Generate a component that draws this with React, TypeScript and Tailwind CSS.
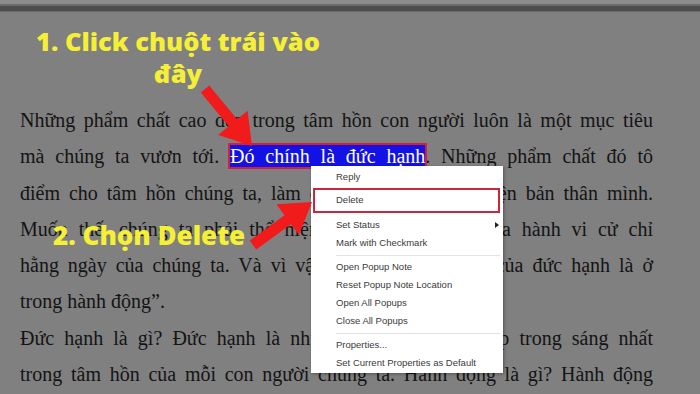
const menuItem = "h-[18px] pl-[25px] flex items-center";

const ContextMenu = () => (
  <div className="absolute left-[311px] top-[166px] w-[192px] h-[207px] bg-white pt-[2px] shadow-[1px_1px_3px_rgba(0,0,0,0.35)] text-[9.5px] text-[#3a3a3a] font-['Liberation_Sans',Arial,sans-serif]">
    <div className={menuItem}>Reply</div>
    <div className="mt-[2px] ml-[2px] mr-[3px] h-[25px] border-2 border-[#c9283c] pl-[21px] flex items-center">Delete</div>
    <div className={menuItem + " mt-[3px] justify-between pr-[4px]"}>
      <span>Set Status</span>
      <svg width="4" height="6" viewBox="0 0 4 6"><path d="M0 0L4 3L0 6Z" fill="#222" /></svg>
    </div>
    <div className={menuItem}>Mark with Checkmark</div>
    <div className="h-[6px] ml-[25px] mr-[3px] flex items-center"><div className="h-px w-full bg-[#e2e2e2]" /></div>
    <div className={menuItem}>Open Popup Note</div>
    <div className={menuItem}>Reset Popup Note Location</div>
    <div className={menuItem}>Open All Popups</div>
    <div className={menuItem}>Close All Popups</div>
    <div className="h-[6px] ml-[25px] mr-[3px] flex items-center"><div className="h-px w-full bg-[#e2e2e2]" /></div>
    <div className={menuItem}>Properties...</div>
    <div className={menuItem}>Set Current Properties as Default</div>
  </div>
);

const Arrows = () => (
  <svg className="absolute inset-0 pointer-events-none" width="700" height="394" viewBox="0 0 700 394">
    <polygon
      fill="#f21b1b"
      points="209.2,85.5 237.1,119.3 247.6,110.7 252,146 218.2,134.9 228.7,126.3 200.8,92.5"
    />
    <polygon
      fill="#f21b1b"
      points="249.8,240.5 284.5,215.2 276.5,204.3 312,202 298.9,235.1 290.9,224.2 256.2,249.5"
    />
  </svg>
);

const line = "text-justify [text-align-last:justify] whitespace-nowrap";

export default function App() {
  return (
    <div className="relative w-[700px] h-[394px] overflow-hidden bg-[#808080]">
      <div className="h-[4px] bg-[#8c8c8c]" />
      <div className="h-[2px] bg-[#6c6c6c]" />
      <div className="h-[5px] bg-[#4e4e4e]" />
      <div className="h-[1px] bg-[#686868]" />

      <div className="pl-[20px] pt-[90px] w-[653px] text-[20px] leading-[36.3px] text-[#141414] font-['Liberation_Serif','Times_New_Roman',serif]">
        <div className={line}>Những phẩm chất cao đẹp trong tâm hồn con người luôn là một mục tiêu</div>
        <div className={line}>
          mà chúng ta vươn tới.{" "}
          <span className="bg-[#1212e6] text-white outline-2 outline-[#d3213b]">Đó chính là đức hạnh</span>. Những phẩm chất đó tô
        </div>
        <div className={line}>điểm cho tâm hồn chúng ta, làm cho chúng ta hoàn thiện bản thân mình.</div>
        <div className={line}>Muốn thế, chúng ta phải thể hiện nó ra bên ngoài qua hành vi cử chỉ</div>
        <div className={line}>hằng ngày của chúng ta. Và vì vậy, cái giá trị thật sự của đức hạnh là ở</div>
        <div>trong hành động”.</div>
        <div className={line}>Đức hạnh là gì? Đức hạnh là những phẩm chất tốt đẹp trong sáng nhất</div>
        <div className={line}>trong tâm hồn của mỗi con người chúng ta. Hành động là gì? Hành động</div>
      </div>

      <ContextMenu />
      <Arrows />

      <div className="absolute left-[30px] top-[25px] w-[296px] text-center text-[25.5px] leading-[32px] font-extrabold text-[#f5ef36] font-['Open_Sans','Lato',sans-serif]">
        1. Click chuột trái vào
        <br />
        đây
      </div>
      <div className="absolute left-[53px] top-[219px] text-[26px] leading-[32px] font-extrabold text-[#f5ef36] font-['Open_Sans','Lato',sans-serif]">
        2. Chọn Delete
      </div>
    </div>
  );
}
